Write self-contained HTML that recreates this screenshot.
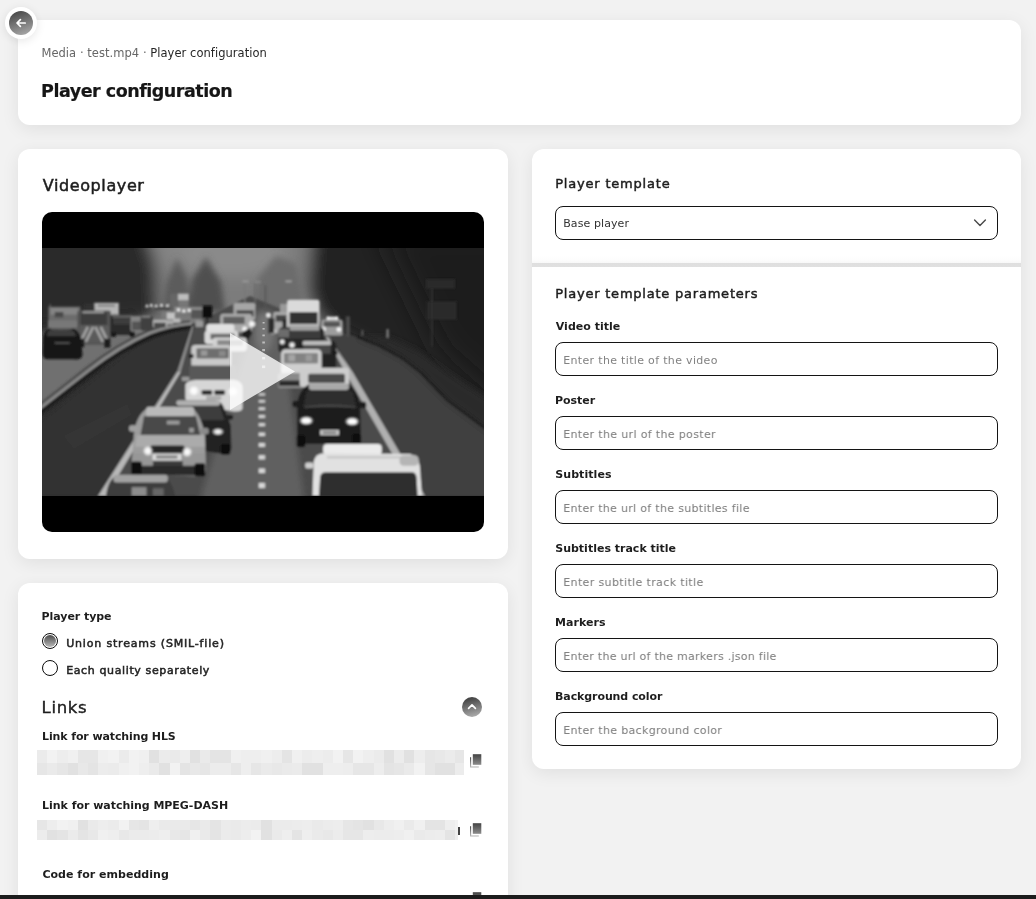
<!DOCTYPE html>
<html lang="en"><head><meta charset="utf-8"><title>Player configuration</title><style>
html,body{margin:0;padding:0}
body{width:1036px;height:899px;overflow:hidden;position:relative;background:#f2f2f2;font-family:"DejaVu Sans","Liberation Sans",sans-serif;filter:grayscale(1);}
.card{position:absolute;background:#fff;border-radius:12px;box-shadow:0 4px 18px rgba(0,0,0,.08)}
.t{position:absolute;white-space:nowrap}
.divider{position:absolute;left:532px;top:255px;width:489px;height:12px;background:linear-gradient(#fff 0,#fdfdfd 40%,#f8f8f8 66%,#dfdfdf 67%,#e0e0e0 100%)}
.back{position:absolute;left:5px;top:7px;width:32px;height:32px;border-radius:50%;background:#fff;box-shadow:0 2px 10px rgba(0,0,0,.10)}
.backin{position:absolute;left:4px;top:4px;width:24px;height:24px;border-radius:50%;background:linear-gradient(160deg,#4a4a4a 10%,#b0b0b0 100%)}
.radio{position:absolute;width:14px;height:14px;border:1px solid #0c0c0c;border-radius:50%;background:#fff}
.radio.on i{position:absolute;left:1px;top:1px;width:12px;height:12px;border-radius:50%;background:linear-gradient(#4a4a4a,#b8b8b8)}
.chev{position:absolute;left:462px;top:697px;width:20px;height:20px;border-radius:50%;background:linear-gradient(165deg,#474747 15%,#b8b8b8 100%)}
.pix{position:absolute;overflow:hidden;background:#ebebeb}
.pix b{position:absolute;display:block}
.copy{position:absolute;left:469px}
.inp{position:absolute;left:555px;width:441px;height:32px;border:1px solid #141414;border-radius:8px;background:#fff}
.bottombar{position:absolute;left:0;top:895px;width:1036px;height:4px;background:#1c1c1c}
</style></head><body>
<div class="card" style="left:18px;top:20px;width:1003px;height:105px"></div>
<div class="card" style="left:18px;top:149px;width:490px;height:410px"></div>
<div class="card" style="left:18px;top:583px;width:490px;height:340px"></div>
<div class="card" style="left:532px;top:149px;width:489px;height:620px"></div>
<div class="divider"></div>
<div class="back"><div class="backin"><svg width="24" height="24" viewBox="0 0 24 24"><path d="M16.2 12H8.2M11.4 8.6L8 12l3.4 3.4" fill="none" stroke="#fff" stroke-width="1.7" stroke-linecap="round" stroke-linejoin="round"/></svg></div></div>
<div class="t" style="left:41.44px;top:45.12px;font-size:11.5px;line-height:16px;font-weight:400;color:#262626;letter-spacing:0.044px;"><span style="color:#666">Media · test.mp4 · </span>Player configuration</div>
<div class="t" style="left:41.09px;top:79.15px;font-size:17.5px;line-height:24px;font-weight:700;color:#161616;letter-spacing:-0.484px;-webkit-text-stroke:0.2px #161616;">Player configuration</div>
<div class="t" style="left:42.68px;top:175.26px;font-size:16px;line-height:22px;font-weight:400;color:#1d1d1d;letter-spacing:0.614px;-webkit-text-stroke:0.5px #1d1d1d;">Videoplayer</div>
<svg style="position:absolute;left:42px;top:212px" width="442" height="320" viewBox="42 212 442 320">
<defs>
<clipPath id="vclip"><rect x="42" y="212" width="442" height="320" rx="10" ry="10"/></clipPath>
<clipPath id="iclip"><rect x="42" y="248" width="442" height="248"/></clipPath>
<filter id="b1" x="-5%" y="-5%" width="110%" height="110%"><feGaussianBlur stdDeviation="0.8"/></filter>
<filter id="b3" x="-20%" y="-20%" width="140%" height="140%"><feGaussianBlur stdDeviation="3"/></filter>
<filter id="b8" x="-30%" y="-30%" width="160%" height="160%"><feGaussianBlur stdDeviation="8"/></filter>
<filter id="b14" x="-40%" y="-40%" width="180%" height="180%"><feGaussianBlur stdDeviation="14"/></filter>
<filter id="glow" x="-100%" y="-100%" width="300%" height="300%"><feGaussianBlur stdDeviation="1.6"/></filter>
<radialGradient id="hl"><stop offset="0" stop-color="#fff"/><stop offset="0.45" stop-color="#fff" stop-opacity=".9"/><stop offset="1" stop-color="#fff" stop-opacity="0"/></radialGradient>
</defs>
<g clip-path="url(#vclip)">
<rect x="42" y="212" width="442" height="320" fill="#000"/>
<g clip-path="url(#iclip)">
<rect x="42" y="248" width="442" height="248" fill="#303030"/>
<g filter="url(#b8)">
<polygon points="146,230 318,230 322,300 332,338 150,338" fill="#7c7c7c"/>
<ellipse cx="232" cy="252" rx="55" ry="26" fill="#8a8a8a"/>
<ellipse cx="160" cy="250" rx="18" ry="22" fill="#848484"/>
<polygon points="20,226 143,226 156,262 158,316 20,330" fill="#2b2b2b"/>
<polygon points="312,236 520,236 520,470 420,372 356,337 318,318 308,290" fill="#222"/>
</g><g filter="url(#b14)">
<polygon points="380,226 530,226 530,430 440,350" fill="#1b1b1b"/>
</g>
<g filter="url(#b3)">
<polygon points="162,312 166,284 177,258 187,278 191,312" fill="#5c5c5c"/>
<polygon points="188,312 192,280 206,257 221,282 225,312" fill="#505050"/>
<polygon points="252,312 258,278 276,256 296,264 306,312" fill="#6c6c6c"/>
<polygon points="30,334 150,316 192,321 150,333 88,371 30,418" fill="#707070"/>
</g>
<g filter="url(#b1)">
<polygon points="30,430 150,335 192,323 200,326 176,372 98,496 30,496" fill="#303030"/>
<polygon points="193,324 250,296 322,326 345,372 417,496 104,496 178,372" fill="#4b4b4b"/>
<g filter="url(#b3)"><polygon points="257,310 271,310 284,345 304,500 200,500 238,372 249,340" fill="#616161"/><ellipse cx="264" cy="332" rx="9" ry="20" fill="#767676"/></g>
<polygon points="327,330 357,337 380,346 402,358 420,372 447,400 490,432 490,496 425,496 352,372" fill="#404040"/>
<path d="M357 337 L380 346 L402 358 L420 372 L447 400 L490 432 L490 400 L447 372 L420 352 L390 338 Z" fill="#2a2a2a" filter="url(#b3)"/>
<path d="M357 337 L380 346 L402 358 L420 372 L447 400 L490 432" stroke="#1b1b1b" stroke-width="2" fill="none"/>
<path d="M36 416 L90 374 Q122 349 152 336 Q174 328 194 326.5" stroke="#1e1e1e" stroke-width="5" fill="none"/>
<path d="M36 411.5 L88 371 Q120 346 150 333 Q172 325 192 323.5" stroke="#8f8f8f" stroke-width="2.6" fill="none"/>
<path d="M36 407.5 L86 368.5 Q118 343.5 148 331 Q170 323 190 321.5" stroke="#4a4a4a" stroke-width="2" fill="none"/>
<polygon points="192,326 193.6,326 180.7,372 177,372" fill="#8c8c8c"/><polygon points="177,372 180.7,372 106,496 98,496" fill="#b8b8b8"/>
<polygon points="326,337 328.5,337 352.6,372 425,496 416.6,496 345,372" fill="#b0b0b0"/>
<g transform="translate(42,248) scale(0.21331)">
<rect x="948" y="155" width="7" height="120" fill="#777"/><rect x="940" y="152" width="28" height="9" fill="#999"/>
<rect x="996" y="158" width="6" height="120" fill="#6a6a6a"/><rect x="996" y="155" width="30" height="8" fill="#8a8a8a"/>
<rect x="600" y="214" width="45" height="62" fill="#666"/>
<rect x="638" y="214" width="50" height="32" fill="#bdbdbd"/><rect x="640" y="246" width="48" height="28" fill="#777"/>
<circle cx="492" cy="272" r="9" fill="url(#hl)"/>
<circle cx="512" cy="268" r="9" fill="url(#hl)"/>
<circle cx="535" cy="272" r="9" fill="url(#hl)"/>
<circle cx="560" cy="268" r="9" fill="url(#hl)"/>
<circle cx="588" cy="270" r="9" fill="url(#hl)"/>
<circle cx="520" cy="282" r="9" fill="url(#hl)"/>
<rect x="485" y="275" width="115" height="16" fill="#444" opacity=".8"/>
<rect x="620" y="276" width="130" height="30" fill="#9a9a9a" opacity=".75"/>
<circle cx="640" cy="290" r="10" fill="url(#hl)"/>
<circle cx="665" cy="296" r="10" fill="url(#hl)"/>
<circle cx="690" cy="292" r="10" fill="url(#hl)"/>
<circle cx="715" cy="300" r="10" fill="url(#hl)"/>
<circle cx="740" cy="308" r="10" fill="url(#hl)"/>
<rect x="560" y="298" width="40" height="30" fill="#7a7a7a"/><rect x="585" y="302" width="38" height="32" fill="#c4c4c4"/>
<rect x="700" y="290" width="55" height="40" fill="#555"/><rect x="720" y="340" width="36" height="30" fill="#9a9a9a"/>
<rect x="30" y="275" width="150" height="98" fill="#6c6c6c"/><rect x="40" y="282" width="130" height="30" fill="#858585"/><rect x="60" y="300" width="40" height="25" fill="#484848"/><rect x="28" y="340" width="150" height="35" fill="#787878"/><rect x="36" y="262" width="4" height="20" fill="#777"/>
<rect x="245" y="257" width="115" height="56" fill="#b6b6b6"/><rect x="262" y="264" width="80" height="12" fill="#8a8a8a"/>
<rect x="196" y="262" width="50" height="30" fill="#333"/>
<rect x="165" y="293" width="158" height="160" rx="10" fill="#555"/>
<rect x="180" y="302" width="125" height="58" fill="#3c3c3c"/><rect x="190" y="296" width="100" height="10" fill="#999"/>
<polygon points="175,365 315,365 315,440 175,440" fill="#5a5a5a"/>
<path d="M180 440L215 370M205 440L240 370M310 440L275 370M285 440L250 370" stroke="#a2a2a2" stroke-width="12" fill="none"/>
<rect x="170" y="425" width="28" height="40" fill="#1c1c1c"/><rect x="292" y="425" width="28" height="42" fill="#1c1c1c"/>
<rect x="320" y="313" width="115" height="95" rx="14" fill="#2c2c2c"/><rect x="330" y="316" width="95" height="10" fill="#6a6a6a"/><rect x="335" y="328" width="80" height="30" fill="#3c3c3c"/><rect x="322" y="395" width="24" height="22" fill="#151515"/><rect x="412" y="395" width="22" height="22" fill="#151515"/>
<rect x="415" y="320" width="65" height="72" rx="10" fill="#858585"/><rect x="422" y="345" width="52" height="40" fill="#555"/>
<rect x="462" y="318" width="58" height="70" rx="10" fill="#3f3f3f"/><rect x="468" y="318" width="40" height="8" fill="#888"/>
<rect x="520" y="336" width="68" height="34" rx="8" fill="#b5b5b5"/><rect x="525" y="350" width="55" height="22" fill="#4a4a4a"/>
<rect x="585" y="338" width="30" height="20" fill="#aaa"/><rect x="615" y="330" width="34" height="20" fill="#bbb"/>
<path d="M5 415 Q10 380 45 376 L140 376 Q172 382 182 420 L190 500 Q188 525 150 522 L30 522 Q0 522 2 490 Z" fill="#191919"/>
<path d="M30 388 Q90 372 150 390 L160 412 L22 412 Z" fill="#3d3d3d"/><rect x="40" y="376" width="100" height="7" fill="#666"/>
<rect x="60" y="440" width="70" height="10" fill="#4a4a4a"/>
<rect x="752" y="270" width="46" height="58" fill="#0e0e0e"/><rect x="771" y="328" width="7" height="45" fill="#1c1c1c"/>
<rect x="898" y="258" width="102" height="80" rx="10" fill="#a6a6a6"/><rect x="912" y="292" width="80" height="30" fill="#4a4a4a"/>
<rect x="835" y="308" width="150" height="88" rx="16" fill="#a9a9a9"/><rect x="850" y="322" width="100" height="34" fill="#5f5f5f"/>
<circle cx="985" cy="356" r="20" fill="url(#hl)"/><circle cx="950" cy="380" r="16" fill="url(#hl)"/>
<path d="M938 395 L975 375 L985 400 L960 440 L940 430 Z" fill="#1b1b1b"/>
<rect x="770" y="356" width="132" height="44" rx="14" fill="#e2e2e2"/>
<rect x="762" y="388" width="158" height="62" rx="16" fill="#d9d9d9"/><rect x="790" y="402" width="112" height="26" fill="#6a6a6a"/>
<rect x="800" y="420" width="160" height="64" rx="16" fill="#d2d2d2"/><rect x="822" y="432" width="120" height="26" fill="#8a8a8a"/>
<rect x="700" y="455" width="186" height="122" rx="18" fill="#c9c9c9"/><rect x="724" y="470" width="152" height="48" rx="6" fill="#6e6e6e"/><rect x="745" y="480" width="30" height="25" fill="#9a9a9a"/><rect x="830" y="482" width="30" height="25" fill="#8a8a8a"/>
<rect x="688" y="498" width="22" height="18" fill="#222"/>
<rect x="712" y="552" width="190" height="40" rx="14" fill="#dedede"/>
</g>
<g transform="translate(263,248) scale(0.21331)">
<rect x="105" y="152" width="30" height="9" fill="#a5a5a5"/><rect x="8" y="175" width="7" height="120" fill="#555"/>
<rect x="765" y="145" width="135" height="45" fill="#2a2a2a"/><rect x="768" y="250" width="140" height="85" fill="#2a2a2a"/><rect x="788" y="190" width="8" height="270" fill="#303030"/>
<rect x="80" y="262" width="40" height="45" fill="#9a9a9a"/>
<rect x="48" y="300" width="65" height="100" rx="8" fill="#a8a8a8"/><rect x="60" y="315" width="50" height="30" fill="#444"/>
<circle cx="25" cy="315" r="14" fill="url(#hl)"/><circle cx="45" cy="390" r="18" fill="url(#hl)"/><rect x="25" y="330" width="28" height="70" fill="#2a2a2a"/>
<rect x="113" y="243" width="152" height="145" rx="10" fill="#dadada"/><rect x="124" y="300" width="132" height="56" rx="4" fill="#333"/><rect x="118" y="356" width="145" height="34" fill="#b5b5b5"/>
<rect x="92" y="335" width="18" height="36" fill="#222"/><rect x="266" y="340" width="18" height="30" fill="#222"/>
<rect x="272" y="335" width="102" height="75" rx="12" fill="#9d9d9d"/><rect x="285" y="345" width="75" height="24" fill="#555"/><rect x="298" y="322" width="55" height="14" fill="#e8e8e8"/>
<circle cx="284" cy="380" r="15" fill="url(#hl)"/><circle cx="356" cy="382" r="15" fill="url(#hl)"/><circle cx="305" cy="328" r="9" fill="url(#hl)"/><circle cx="345" cy="328" r="9" fill="url(#hl)"/>
<rect x="388" y="320" width="20" height="95" fill="#4a4a4a"/>
<rect x="72" y="372" width="215" height="120" rx="20" fill="#262626"/><rect x="125" y="372" width="140" height="16" rx="6" fill="#a5a5a5"/><rect x="120" y="388" width="150" height="38" fill="#3a3a3a"/>
<circle cx="90" cy="440" r="16" fill="url(#hl)"/><circle cx="136" cy="455" r="18" fill="url(#hl)"/><rect x="72" y="380" width="50" height="40" fill="#8a8a8a" opacity=".7"/>
<rect x="168" y="436" width="175" height="135" rx="20" fill="#232323"/><rect x="185" y="436" width="135" height="20" rx="8" fill="#bcbcbc"/><rect x="188" y="456" width="130" height="40" fill="#484848"/><rect x="325" y="482" width="24" height="18" fill="#1b1b1b"/>
<rect x="85" y="475" width="190" height="120" rx="20" fill="#cfcfcf"/><rect x="98" y="492" width="160" height="50" rx="6" fill="#838383"/><rect x="120" y="500" width="30" height="30" fill="#a5a5a5"/><rect x="200" y="500" width="30" height="30" fill="#9a9a9a"/>
<rect x="580" y="380" width="8" height="40" fill="#9a9a9a"/><rect x="463" y="385" width="6" height="25" fill="#777"/>
</g>
<g transform="translate(42,372) scale(0.21331)">
<polygon points="100,300 400,150 420,200 150,360" fill="#383838" opacity=".6"/>
<rect x="690" y="-30" width="220" height="80" rx="10" fill="#595959"/>
<path d="M672 60 Q680 40 720 38 L900 38 Q935 42 940 70 L940 170 Q935 188 900 185 L700 150 Q672 140 672 120 Z" fill="#d6d6d6"/>
<rect x="748" y="84" width="50" height="24" rx="8" fill="#333"/><rect x="808" y="84" width="50" height="24" rx="8" fill="#333"/>
<rect x="655" y="22" width="36" height="20" rx="6" fill="#999"/>
<circle cx="712" cy="88" r="26" fill="url(#hl)"/><circle cx="895" cy="92" r="26" fill="url(#hl)"/>
<rect x="770" y="112" width="70" height="18" fill="#aaa"/>
<path d="M625 160 Q640 132 680 132 L810 132 Q840 136 850 160 L885 250 L888 360 Q885 385 850 385 L760 370 L740 200 Z" fill="#202020"/>
<rect x="630" y="132" width="205" height="26" rx="10" fill="#b0b0b0"/>
<polygon points="655,160 835,160 855,225 740,225 700,190" fill="#3d3d3d"/>
<ellipse cx="825" cy="280" rx="30" ry="18" fill="url(#hl)"/>
<rect x="860" y="200" width="36" height="24" rx="8" fill="#222"/><rect x="838" y="340" width="45" height="48" rx="10" fill="#111"/>
<path d="M430 300 Q440 200 495 170 L705 170 Q745 200 765 300 L768 460 Q765 490 740 490 L445 480 Q418 478 420 440 Z" fill="#9c9c9c"/>
<rect x="488" y="163" width="225" height="46" rx="14" fill="#b9b9b9"/>
<polygon points="478,208 722,208 742,295 462,295" fill="#494949"/>
<rect x="585" y="228" width="60" height="18" fill="#9a9a9a"/><rect x="690" y="262" width="22" height="22" fill="#999"/>
<polygon points="445,296 758,296 765,350 435,350" fill="#ababab"/>
<rect x="508" y="345" width="160" height="36" rx="8" fill="#262626"/>
<rect x="425" y="380" width="340" height="62" rx="8" fill="#979797"/>
<rect x="518" y="385" width="135" height="28" fill="#dcdcdc"/><rect x="535" y="392" width="100" height="13" fill="#777"/>
<rect x="520" y="418" width="140" height="26" fill="#3a3a3a"/>
<rect x="440" y="440" width="315" height="45" rx="8" fill="#2c2c2c"/>
<rect x="418" y="420" width="50" height="62" rx="10" fill="#0f0f0f"/><rect x="715" y="428" width="50" height="62" rx="10" fill="#0f0f0f"/>
<rect x="408" y="250" width="42" height="30" rx="10" fill="#a0a0a0"/><rect x="742" y="262" width="40" height="30" rx="10" fill="#8a8a8a"/>
<circle cx="497" cy="370" r="26" fill="url(#hl)"/><circle cx="680" cy="375" r="26" fill="url(#hl)"/>
<path d="M300 581 Q310 500 350 485 L570 485 Q605 500 625 581 Z" fill="#3c3c3c"/>
<rect x="335" y="482" width="255" height="36" rx="14" fill="#a2a2a2"/>
<rect x="420" y="540" width="70" height="41" fill="#8c8c8c"/><rect x="520" y="545" width="50" height="36" fill="#666"/>
<rect x="1016" y="100" width="20" height="10" fill="#d8d8d8"/>
<rect x="1016" y="132" width="20" height="11" fill="#d8d8d8"/>
<rect x="1016" y="166" width="20" height="12" fill="#d8d8d8"/>
<rect x="1016" y="202" width="20" height="13" fill="#d8d8d8"/>
<rect x="1016" y="240" width="20" height="14" fill="#d8d8d8"/>
<rect x="1016" y="284" width="20" height="16" fill="#d8d8d8"/>
<rect x="1016" y="333" width="20" height="18" fill="#d8d8d8"/>
<rect x="1016" y="390" width="20" height="20" fill="#d8d8d8"/>
<rect x="1016" y="452" width="20" height="22" fill="#d8d8d8"/>
<rect x="1016" y="520" width="20" height="24" fill="#d8d8d8"/>
</g>
<g transform="translate(263,372) scale(0.21331)">
<rect x="0" y="100" width="10" height="10" fill="#d0d0d0"/>
<rect x="0" y="132" width="10" height="11" fill="#d0d0d0"/>
<rect x="0" y="166" width="10" height="12" fill="#d0d0d0"/>
<rect x="0" y="202" width="10" height="13" fill="#d0d0d0"/>
<rect x="0" y="240" width="10" height="14" fill="#d0d0d0"/>
<rect x="0" y="284" width="10" height="16" fill="#d0d0d0"/>
<rect x="0" y="333" width="10" height="18" fill="#d0d0d0"/>
<rect x="0" y="390" width="10" height="20" fill="#d0d0d0"/>
<rect x="0" y="452" width="10" height="22" fill="#d0d0d0"/>
<rect x="0" y="520" width="10" height="24" fill="#d0d0d0"/>
<rect x="70" y="5" width="120" height="70" rx="12" fill="#8a8a8a"/><rect x="75" y="40" width="100" height="25" fill="#2a2a2a"/>
<rect x="172" y="-20" width="232" height="90" rx="16" fill="#cdcdcd"/><rect x="212" y="8" width="172" height="44" rx="8" fill="#4b4b4b"/>
<path d="M160 150 Q170 80 215 58 L400 58 Q440 80 455 150 L460 320 Q458 340 430 338 L190 338 Q158 338 160 310 Z" fill="#1d1d1d"/>
<rect x="215" y="54" width="188" height="30" rx="12" fill="#a9a9a9"/>
<polygon points="205,88 420,88 438,165 188,165" fill="#2d2d2d"/>
<path d="M195 165 Q310 150 435 165" stroke="#555" stroke-width="5" fill="none"/>
<rect x="138" y="135" width="34" height="30" rx="10" fill="#1c1c1c"/><rect x="452" y="140" width="32" height="30" rx="10" fill="#1c1c1c"/>
<rect x="268" y="272" width="88" height="24" fill="#cacaca"/><rect x="280" y="279" width="64" height="10" fill="#6f6f6f"/>
<rect x="158" y="295" width="40" height="58" rx="10" fill="#0d0d0d"/><rect x="418" y="290" width="42" height="48" rx="10" fill="#0d0d0d"/>
<ellipse cx="203" cy="228" rx="36" ry="22" fill="url(#hl)"/><ellipse cx="418" cy="232" rx="36" ry="22" fill="url(#hl)"/>
<ellipse cx="203" cy="228" rx="22" ry="12" fill="#fff"/><ellipse cx="418" cy="232" rx="22" ry="12" fill="#fff"/>
<rect x="282" y="338" width="275" height="50" rx="18" fill="#ebebeb"/>
<path d="M232 581 L238 420 Q245 382 290 380 L690 385 Q730 395 735 440 L745 581 Z" fill="#e1e1e1"/>
<path d="M262 581 L268 490 Q272 470 295 470 L700 470 Q718 472 720 495 L725 581 Z" fill="#2d2d2d"/>
<rect x="300" y="395" width="390" height="10" fill="#c4c4c4"/>
<rect x="198" y="424" width="38" height="28" rx="8" fill="#d0d0d0"/>
<rect x="640" y="390" width="90" height="50" rx="20" fill="#b5b5b5"/>
</g>
</g>
<rect x="262.6" y="322" width="2" height="1.5" fill="#cfcfcf" opacity=".8"/>
<rect x="262.5" y="328" width="2.2" height="1.6" fill="#cfcfcf" opacity=".8"/>
<rect x="262.4" y="334.5" width="2.4" height="1.8" fill="#cfcfcf" opacity=".8"/>
<rect x="262.3" y="341.5" width="2.6" height="2" fill="#cfcfcf" opacity=".8"/>
<rect x="262.2" y="349" width="2.8" height="2.2" fill="#cfcfcf" opacity=".8"/>
<rect x="262.1" y="357" width="3" height="2.4" fill="#cfcfcf" opacity=".8"/>
<rect x="262.0" y="365.5" width="3.2" height="2.6" fill="#cfcfcf" opacity=".8"/>
<polygon points="230,333 230,410 295,371.5" fill="#fff" opacity=".78"/>
</g></g></svg>
<div class="t" style="left:41.54px;top:608.69px;font-size:11px;line-height:15px;font-weight:700;color:#1d1d1d;letter-spacing:-0.058px;">Player type</div>
<div class="radio on" style="left:42px;top:633px"><i></i></div>
<div class="radio" style="left:42px;top:660px"></div>
<div class="t" style="left:66.17px;top:635.59px;font-size:11px;line-height:15px;font-weight:400;color:#262626;letter-spacing:0.825px;-webkit-text-stroke:0.5px #222;">Union streams (SMIL-file)</div>
<div class="t" style="left:66.17px;top:662.69px;font-size:11px;line-height:15px;font-weight:400;color:#262626;letter-spacing:0.624px;-webkit-text-stroke:0.5px #222;">Each quality separately</div>
<div class="t" style="left:41.59px;top:695.79px;font-size:16.5px;line-height:23px;font-weight:400;color:#1d1d1d;letter-spacing:0.67px;-webkit-text-stroke:0.4px #1d1d1d;">Links</div>
<div class="chev"><svg width="20" height="20" viewBox="0 0 20 20"><path d="M6.6 11.3L10 7.9l3.4 3.4" fill="none" stroke="#fff" stroke-width="1.7" stroke-linecap="round" stroke-linejoin="round"/></svg></div>
<div class="t" style="left:42.04px;top:728.89px;font-size:11px;line-height:15px;font-weight:700;color:#1d1d1d;letter-spacing:-0.112px;">Link for watching HLS</div>
<div class="t" style="left:42.04px;top:797.89px;font-size:11px;line-height:15px;font-weight:700;color:#1d1d1d;letter-spacing:-0.026px;">Link for watching MPEG-DASH</div>
<div class="t" style="left:42.39px;top:866.89px;font-size:11px;line-height:15px;font-weight:700;color:#1d1d1d;letter-spacing:0.031px;">Code for embedding</div>
<div class="pix" style="left:37px;top:750px;width:427px;height:25px"><b style="left:0.0px;top:0px;width:10.4px;height:13px;background:#ebebeb"></b><b style="left:0.0px;top:13px;width:10.4px;height:12px;background:#e6e6e6"></b><b style="left:10.2px;top:0px;width:10.4px;height:13px;background:#f2f2f2"></b><b style="left:10.2px;top:13px;width:10.4px;height:12px;background:#eaeaea"></b><b style="left:20.4px;top:0px;width:10.4px;height:13px;background:#ededed"></b><b style="left:20.4px;top:13px;width:10.4px;height:12px;background:#e6e6e6"></b><b style="left:30.6px;top:0px;width:10.4px;height:13px;background:#f0f0f0"></b><b style="left:30.6px;top:13px;width:10.4px;height:12px;background:#e1e1e1"></b><b style="left:40.8px;top:0px;width:10.4px;height:13px;background:#e6e6e6"></b><b style="left:40.8px;top:13px;width:10.4px;height:12px;background:#e8e8e8"></b><b style="left:51.0px;top:0px;width:10.4px;height:13px;background:#e6e6e6"></b><b style="left:51.0px;top:13px;width:10.4px;height:12px;background:#e4e4e4"></b><b style="left:61.2px;top:0px;width:10.4px;height:13px;background:#f0f0f0"></b><b style="left:61.2px;top:13px;width:10.4px;height:12px;background:#ececec"></b><b style="left:71.4px;top:0px;width:10.4px;height:13px;background:#f2f2f2"></b><b style="left:71.4px;top:13px;width:10.4px;height:12px;background:#ebebeb"></b><b style="left:81.6px;top:0px;width:10.4px;height:13px;background:#ebebeb"></b><b style="left:81.6px;top:13px;width:10.4px;height:12px;background:#f0f0f0"></b><b style="left:91.8px;top:0px;width:10.4px;height:13px;background:#f2f2f2"></b><b style="left:91.8px;top:13px;width:10.4px;height:12px;background:#f2f2f2"></b><b style="left:102.0px;top:0px;width:10.4px;height:13px;background:#f0f0f0"></b><b style="left:102.0px;top:13px;width:10.4px;height:12px;background:#eeeeee"></b><b style="left:112.2px;top:0px;width:10.4px;height:13px;background:#e1e1e1"></b><b style="left:112.2px;top:13px;width:10.4px;height:12px;background:#eaeaea"></b><b style="left:122.4px;top:0px;width:10.4px;height:13px;background:#ebebeb"></b><b style="left:122.4px;top:13px;width:10.4px;height:12px;background:#e1e1e1"></b><b style="left:132.6px;top:0px;width:10.4px;height:13px;background:#eaeaea"></b><b style="left:132.6px;top:13px;width:10.4px;height:12px;background:#f2f2f2"></b><b style="left:142.8px;top:0px;width:10.4px;height:13px;background:#eeeeee"></b><b style="left:142.8px;top:13px;width:10.4px;height:12px;background:#e4e4e4"></b><b style="left:153.0px;top:0px;width:10.4px;height:13px;background:#e1e1e1"></b><b style="left:153.0px;top:13px;width:10.4px;height:12px;background:#e8e8e8"></b><b style="left:163.2px;top:0px;width:10.4px;height:13px;background:#eaeaea"></b><b style="left:163.2px;top:13px;width:10.4px;height:12px;background:#e6e6e6"></b><b style="left:173.4px;top:0px;width:10.4px;height:13px;background:#e4e4e4"></b><b style="left:173.4px;top:13px;width:10.4px;height:12px;background:#ececec"></b><b style="left:183.6px;top:0px;width:10.4px;height:13px;background:#e4e4e4"></b><b style="left:183.6px;top:13px;width:10.4px;height:12px;background:#ececec"></b><b style="left:193.8px;top:0px;width:10.4px;height:13px;background:#f0f0f0"></b><b style="left:193.8px;top:13px;width:10.4px;height:12px;background:#e6e6e6"></b><b style="left:204.0px;top:0px;width:10.4px;height:13px;background:#eeeeee"></b><b style="left:204.0px;top:13px;width:10.4px;height:12px;background:#eeeeee"></b><b style="left:214.2px;top:0px;width:10.4px;height:13px;background:#eeeeee"></b><b style="left:214.2px;top:13px;width:10.4px;height:12px;background:#e6e6e6"></b><b style="left:224.4px;top:0px;width:10.4px;height:13px;background:#f0f0f0"></b><b style="left:224.4px;top:13px;width:10.4px;height:12px;background:#eaeaea"></b><b style="left:234.6px;top:0px;width:10.4px;height:13px;background:#ededed"></b><b style="left:234.6px;top:13px;width:10.4px;height:12px;background:#e8e8e8"></b><b style="left:244.8px;top:0px;width:10.4px;height:13px;background:#e4e4e4"></b><b style="left:244.8px;top:13px;width:10.4px;height:12px;background:#eaeaea"></b><b style="left:255.0px;top:0px;width:10.4px;height:13px;background:#f0f0f0"></b><b style="left:255.0px;top:13px;width:10.4px;height:12px;background:#ebebeb"></b><b style="left:265.2px;top:0px;width:10.4px;height:13px;background:#ececec"></b><b style="left:265.2px;top:13px;width:10.4px;height:12px;background:#e1e1e1"></b><b style="left:275.4px;top:0px;width:10.4px;height:13px;background:#eeeeee"></b><b style="left:275.4px;top:13px;width:10.4px;height:12px;background:#e1e1e1"></b><b style="left:285.6px;top:0px;width:10.4px;height:13px;background:#ececec"></b><b style="left:285.6px;top:13px;width:10.4px;height:12px;background:#eeeeee"></b><b style="left:295.8px;top:0px;width:10.4px;height:13px;background:#f2f2f2"></b><b style="left:295.8px;top:13px;width:10.4px;height:12px;background:#eeeeee"></b><b style="left:306.0px;top:0px;width:10.4px;height:13px;background:#e6e6e6"></b><b style="left:306.0px;top:13px;width:10.4px;height:12px;background:#ededed"></b><b style="left:316.2px;top:0px;width:10.4px;height:13px;background:#f2f2f2"></b><b style="left:316.2px;top:13px;width:10.4px;height:12px;background:#e6e6e6"></b><b style="left:326.4px;top:0px;width:10.4px;height:13px;background:#eeeeee"></b><b style="left:326.4px;top:13px;width:10.4px;height:12px;background:#e6e6e6"></b><b style="left:336.6px;top:0px;width:10.4px;height:13px;background:#ebebeb"></b><b style="left:336.6px;top:13px;width:10.4px;height:12px;background:#ededed"></b><b style="left:346.8px;top:0px;width:10.4px;height:13px;background:#e1e1e1"></b><b style="left:346.8px;top:13px;width:10.4px;height:12px;background:#e4e4e4"></b><b style="left:357.0px;top:0px;width:10.4px;height:13px;background:#ececec"></b><b style="left:357.0px;top:13px;width:10.4px;height:12px;background:#e6e6e6"></b><b style="left:367.2px;top:0px;width:10.4px;height:13px;background:#e1e1e1"></b><b style="left:367.2px;top:13px;width:10.4px;height:12px;background:#eaeaea"></b><b style="left:377.4px;top:0px;width:10.4px;height:13px;background:#ededed"></b><b style="left:377.4px;top:13px;width:10.4px;height:12px;background:#f2f2f2"></b><b style="left:387.6px;top:0px;width:10.4px;height:13px;background:#e6e6e6"></b><b style="left:387.6px;top:13px;width:10.4px;height:12px;background:#e6e6e6"></b><b style="left:397.8px;top:0px;width:10.4px;height:13px;background:#e8e8e8"></b><b style="left:397.8px;top:13px;width:10.4px;height:12px;background:#e1e1e1"></b><b style="left:408.0px;top:0px;width:10.4px;height:13px;background:#ebebeb"></b><b style="left:408.0px;top:13px;width:10.4px;height:12px;background:#e1e1e1"></b><b style="left:418.2px;top:0px;width:9.0px;height:13px;background:#e6e6e6"></b><b style="left:418.2px;top:13px;width:9.0px;height:12px;background:#ececec"></b></div>
<div class="pix" style="left:37px;top:820px;width:421px;height:20px"><b style="left:0.0px;top:0px;width:10.4px;height:10px;background:#e6e6e6"></b><b style="left:0.0px;top:10px;width:10.4px;height:10px;background:#ececec"></b><b style="left:10.2px;top:0px;width:10.4px;height:10px;background:#ededed"></b><b style="left:10.2px;top:10px;width:10.4px;height:10px;background:#e1e1e1"></b><b style="left:20.4px;top:0px;width:10.4px;height:10px;background:#f2f2f2"></b><b style="left:20.4px;top:10px;width:10.4px;height:10px;background:#e4e4e4"></b><b style="left:30.6px;top:0px;width:10.4px;height:10px;background:#f0f0f0"></b><b style="left:30.6px;top:10px;width:10.4px;height:10px;background:#ebebeb"></b><b style="left:40.8px;top:0px;width:10.4px;height:10px;background:#e1e1e1"></b><b style="left:40.8px;top:10px;width:10.4px;height:10px;background:#e4e4e4"></b><b style="left:51.0px;top:0px;width:10.4px;height:10px;background:#eaeaea"></b><b style="left:51.0px;top:10px;width:10.4px;height:10px;background:#e8e8e8"></b><b style="left:61.2px;top:0px;width:10.4px;height:10px;background:#ededed"></b><b style="left:61.2px;top:10px;width:10.4px;height:10px;background:#f0f0f0"></b><b style="left:71.4px;top:0px;width:10.4px;height:10px;background:#ebebeb"></b><b style="left:71.4px;top:10px;width:10.4px;height:10px;background:#eeeeee"></b><b style="left:81.6px;top:0px;width:10.4px;height:10px;background:#f2f2f2"></b><b style="left:81.6px;top:10px;width:10.4px;height:10px;background:#e8e8e8"></b><b style="left:91.8px;top:0px;width:10.4px;height:10px;background:#e6e6e6"></b><b style="left:91.8px;top:10px;width:10.4px;height:10px;background:#ebebeb"></b><b style="left:102.0px;top:0px;width:10.4px;height:10px;background:#e4e4e4"></b><b style="left:102.0px;top:10px;width:10.4px;height:10px;background:#ebebeb"></b><b style="left:112.2px;top:0px;width:10.4px;height:10px;background:#eeeeee"></b><b style="left:112.2px;top:10px;width:10.4px;height:10px;background:#ececec"></b><b style="left:122.4px;top:0px;width:10.4px;height:10px;background:#eaeaea"></b><b style="left:122.4px;top:10px;width:10.4px;height:10px;background:#eeeeee"></b><b style="left:132.6px;top:0px;width:10.4px;height:10px;background:#eaeaea"></b><b style="left:132.6px;top:10px;width:10.4px;height:10px;background:#e8e8e8"></b><b style="left:142.8px;top:0px;width:10.4px;height:10px;background:#eaeaea"></b><b style="left:142.8px;top:10px;width:10.4px;height:10px;background:#e6e6e6"></b><b style="left:153.0px;top:0px;width:10.4px;height:10px;background:#e6e6e6"></b><b style="left:153.0px;top:10px;width:10.4px;height:10px;background:#f0f0f0"></b><b style="left:163.2px;top:0px;width:10.4px;height:10px;background:#eaeaea"></b><b style="left:163.2px;top:10px;width:10.4px;height:10px;background:#eaeaea"></b><b style="left:173.4px;top:0px;width:10.4px;height:10px;background:#e4e4e4"></b><b style="left:173.4px;top:10px;width:10.4px;height:10px;background:#e4e4e4"></b><b style="left:183.6px;top:0px;width:10.4px;height:10px;background:#ebebeb"></b><b style="left:183.6px;top:10px;width:10.4px;height:10px;background:#ebebeb"></b><b style="left:193.8px;top:0px;width:10.4px;height:10px;background:#eaeaea"></b><b style="left:193.8px;top:10px;width:10.4px;height:10px;background:#eaeaea"></b><b style="left:204.0px;top:0px;width:10.4px;height:10px;background:#ececec"></b><b style="left:204.0px;top:10px;width:10.4px;height:10px;background:#ededed"></b><b style="left:214.2px;top:0px;width:10.4px;height:10px;background:#ebebeb"></b><b style="left:214.2px;top:10px;width:10.4px;height:10px;background:#f2f2f2"></b><b style="left:224.4px;top:0px;width:10.4px;height:10px;background:#e1e1e1"></b><b style="left:224.4px;top:10px;width:10.4px;height:10px;background:#e1e1e1"></b><b style="left:234.6px;top:0px;width:10.4px;height:10px;background:#ebebeb"></b><b style="left:234.6px;top:10px;width:10.4px;height:10px;background:#eaeaea"></b><b style="left:244.8px;top:0px;width:10.4px;height:10px;background:#ebebeb"></b><b style="left:244.8px;top:10px;width:10.4px;height:10px;background:#eeeeee"></b><b style="left:255.0px;top:0px;width:10.4px;height:10px;background:#ececec"></b><b style="left:255.0px;top:10px;width:10.4px;height:10px;background:#e4e4e4"></b><b style="left:265.2px;top:0px;width:10.4px;height:10px;background:#ededed"></b><b style="left:265.2px;top:10px;width:10.4px;height:10px;background:#eeeeee"></b><b style="left:275.4px;top:0px;width:10.4px;height:10px;background:#eaeaea"></b><b style="left:275.4px;top:10px;width:10.4px;height:10px;background:#eaeaea"></b><b style="left:285.6px;top:0px;width:10.4px;height:10px;background:#ececec"></b><b style="left:285.6px;top:10px;width:10.4px;height:10px;background:#e8e8e8"></b><b style="left:295.8px;top:0px;width:10.4px;height:10px;background:#ededed"></b><b style="left:295.8px;top:10px;width:10.4px;height:10px;background:#ececec"></b><b style="left:306.0px;top:0px;width:10.4px;height:10px;background:#e6e6e6"></b><b style="left:306.0px;top:10px;width:10.4px;height:10px;background:#e6e6e6"></b><b style="left:316.2px;top:0px;width:10.4px;height:10px;background:#e4e4e4"></b><b style="left:316.2px;top:10px;width:10.4px;height:10px;background:#e6e6e6"></b><b style="left:326.4px;top:0px;width:10.4px;height:10px;background:#e1e1e1"></b><b style="left:326.4px;top:10px;width:10.4px;height:10px;background:#ededed"></b><b style="left:336.6px;top:0px;width:10.4px;height:10px;background:#e8e8e8"></b><b style="left:336.6px;top:10px;width:10.4px;height:10px;background:#ececec"></b><b style="left:346.8px;top:0px;width:10.4px;height:10px;background:#ededed"></b><b style="left:346.8px;top:10px;width:10.4px;height:10px;background:#ececec"></b><b style="left:357.0px;top:0px;width:10.4px;height:10px;background:#f0f0f0"></b><b style="left:357.0px;top:10px;width:10.4px;height:10px;background:#ededed"></b><b style="left:367.2px;top:0px;width:10.4px;height:10px;background:#eaeaea"></b><b style="left:367.2px;top:10px;width:10.4px;height:10px;background:#f0f0f0"></b><b style="left:377.4px;top:0px;width:10.4px;height:10px;background:#f0f0f0"></b><b style="left:377.4px;top:10px;width:10.4px;height:10px;background:#eaeaea"></b><b style="left:387.6px;top:0px;width:10.4px;height:10px;background:#e4e4e4"></b><b style="left:387.6px;top:10px;width:10.4px;height:10px;background:#ececec"></b><b style="left:397.8px;top:0px;width:10.4px;height:10px;background:#e4e4e4"></b><b style="left:397.8px;top:10px;width:10.4px;height:10px;background:#ededed"></b><b style="left:408.0px;top:0px;width:10.4px;height:10px;background:#eeeeee"></b><b style="left:408.0px;top:10px;width:10.4px;height:10px;background:#e4e4e4"></b><b style="left:418.2px;top:0px;width:3.0px;height:10px;background:#f2f2f2"></b><b style="left:418.2px;top:10px;width:3.0px;height:10px;background:#eeeeee"></b></div>
<div style="position:absolute;left:458.4px;top:827px;width:1.2px;height:8px;background:#444"></div>
<svg class="copy" style="top:753px" width="14" height="15" viewBox="0 0 14 15"><defs><linearGradient id="cg0" x1="0" y1="0" x2="0" y2="1"><stop offset="0" stop-color="#444"/><stop offset="1" stop-color="#8c8c8c"/></linearGradient><linearGradient id="cl0" x1="0" y1="0" x2="0" y2="1"><stop offset="0" stop-color="#444"/><stop offset="1" stop-color="#b4b4b4"/></linearGradient></defs><rect x="3.8" y="1.2" width="8.5" height="10.6" fill="url(#cg0)"/><path d="M1.6 4.2V14H9.8" fill="none" stroke="url(#cl0)" stroke-width="1.1"/></svg>
<svg class="copy" style="top:822px" width="14" height="15" viewBox="0 0 14 15"><defs><linearGradient id="cg1" x1="0" y1="0" x2="0" y2="1"><stop offset="0" stop-color="#444"/><stop offset="1" stop-color="#8c8c8c"/></linearGradient><linearGradient id="cl1" x1="0" y1="0" x2="0" y2="1"><stop offset="0" stop-color="#444"/><stop offset="1" stop-color="#b4b4b4"/></linearGradient></defs><rect x="3.8" y="1.2" width="8.5" height="10.6" fill="url(#cg1)"/><path d="M1.6 4.2V14H9.8" fill="none" stroke="url(#cl1)" stroke-width="1.1"/></svg>
<svg class="copy" style="top:891px" width="14" height="15" viewBox="0 0 14 15"><defs><linearGradient id="cg2" x1="0" y1="0" x2="0" y2="1"><stop offset="0" stop-color="#444"/><stop offset="1" stop-color="#8c8c8c"/></linearGradient><linearGradient id="cl2" x1="0" y1="0" x2="0" y2="1"><stop offset="0" stop-color="#444"/><stop offset="1" stop-color="#b4b4b4"/></linearGradient></defs><rect x="3.8" y="1.2" width="8.5" height="10.6" fill="url(#cg2)"/><path d="M1.6 4.2V14H9.8" fill="none" stroke="url(#cl2)" stroke-width="1.1"/></svg>
<div class="t" style="left:555.2199999999999px;top:174.50px;font-size:13px;line-height:18px;font-weight:400;color:#1d1d1d;letter-spacing:0.797px;-webkit-text-stroke:0.45px #1d1d1d;">Player template</div>
<div class="inp" style="top:206px"></div>
<div class="t" style="left:563.2199999999999px;top:215.69px;font-size:11px;line-height:15px;font-weight:400;color:#333;letter-spacing:0.087px;">Base player</div>
<svg style="position:absolute;left:970px;top:213px" width="20" height="20" viewBox="0 0 20 20"><path d="M4.6 7L10 12.6 15.4 7" fill="none" stroke="#4a4a4a" stroke-width="1.4" stroke-linecap="round" stroke-linejoin="round"/></svg>
<div class="t" style="left:555.2199999999999px;top:284.50px;font-size:13px;line-height:18px;font-weight:400;color:#1d1d1d;letter-spacing:0.776px;-webkit-text-stroke:0.45px #1d1d1d;">Player template parameters</div>
<div class="t" style="left:555.8100000000001px;top:318.89px;font-size:11px;line-height:15px;font-weight:700;color:#1d1d1d;letter-spacing:0.003px;">Video title</div>
<div class="inp" style="top:342px"></div>
<div class="t" style="left:563.2199999999999px;top:352.89px;font-size:11px;line-height:15px;font-weight:400;color:#828282;letter-spacing:0.332px;">Enter the title of the video</div>
<div class="t" style="left:555.01px;top:392.89px;font-size:11px;line-height:15px;font-weight:700;color:#1d1d1d;letter-spacing:-0.022px;">Poster</div>
<div class="inp" style="top:416px"></div>
<div class="t" style="left:563.2199999999999px;top:426.89px;font-size:11px;line-height:15px;font-weight:400;color:#828282;letter-spacing:0.348px;">Enter the url of the poster</div>
<div class="t" style="left:555.24px;top:466.89px;font-size:11px;line-height:15px;font-weight:700;color:#1d1d1d;letter-spacing:0.073px;">Subtitles</div>
<div class="inp" style="top:490px"></div>
<div class="t" style="left:563.2199999999999px;top:500.89px;font-size:11px;line-height:15px;font-weight:400;color:#828282;letter-spacing:0.317px;">Enter the url of the subtitles file</div>
<div class="t" style="left:555.24px;top:540.89px;font-size:11px;line-height:15px;font-weight:700;color:#1d1d1d;letter-spacing:0.0px;">Subtitles track title</div>
<div class="inp" style="top:564px"></div>
<div class="t" style="left:563.2199999999999px;top:574.89px;font-size:11px;line-height:15px;font-weight:400;color:#828282;letter-spacing:0.373px;">Enter subtitle track title</div>
<div class="t" style="left:555.01px;top:614.89px;font-size:11px;line-height:15px;font-weight:700;color:#1d1d1d;letter-spacing:0.061px;">Markers</div>
<div class="inp" style="top:638px"></div>
<div class="t" style="left:563.2199999999999px;top:648.89px;font-size:11px;line-height:15px;font-weight:400;color:#828282;letter-spacing:0.267px;">Enter the url of the markers .json file</div>
<div class="t" style="left:555.01px;top:688.89px;font-size:11px;line-height:15px;font-weight:700;color:#1d1d1d;letter-spacing:-0.089px;">Background color</div>
<div class="inp" style="top:712px"></div>
<div class="t" style="left:563.2199999999999px;top:722.89px;font-size:11px;line-height:15px;font-weight:400;color:#828282;letter-spacing:0.338px;">Enter the background color</div>
<div class="bottombar"></div>
</body></html>
